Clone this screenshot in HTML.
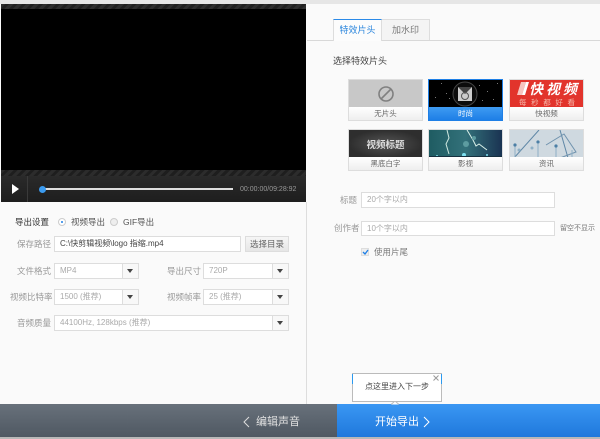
<!DOCTYPE html>
<html><head><meta charset="utf-8">
<style>
*{box-sizing:border-box;margin:0;padding:0}
html,body{width:600px;height:439px;overflow:hidden;background:#fafafa;font-family:"Liberation Sans","Noto Sans CJK SC",sans-serif;font-size:8.5px;color:#888}
#w{position:absolute;left:0;top:0;width:600px;height:439px;filter:blur(.35px);background:#fafafa}
.a{position:absolute}
.t{position:absolute;white-space:nowrap;line-height:12px;height:12px}
.inp{position:absolute;background:#fff;border:1px solid #ddd;height:16px;line-height:13px;padding-left:5px;color:#aaa;font-size:8px}
.sel{position:absolute;background:#fff;border:1px solid #ddd;height:16px;line-height:14px;padding-left:5px;color:#aaa;font-size:8px}
.sel i{position:absolute;right:0;top:0;width:16px;height:14px;border-left:1px solid #ddd;background:#f8f8f8}
.sel i:after{content:"";position:absolute;left:4px;top:5px;border:3px solid transparent;border-top:4px solid #444;border-bottom:0}
.th{position:absolute;width:75px;height:42px;background:#f6f6f6;border:1px solid #ddd}
.th svg{position:absolute;left:0;top:0;display:block}
.th span{position:absolute;left:0;right:0;bottom:0;height:13px;line-height:13px;text-align:center;font-size:7.5px;color:#666;background:linear-gradient(#fff,#eee)}
</style></head><body><div id="w">
<div class="a" style="left:0;top:0;width:600px;height:4px;background:#e6e6e6"></div>

<!-- left: video -->
<div class="a" style="left:1px;top:4px;width:305px;height:198px;background:#000"></div>
<div class="a" style="left:1px;top:4px;width:305px;height:5px;background:repeating-linear-gradient(135deg,#2e2e2e 0 3px,#202020 3px 6px)"></div>
<div class="a" style="left:1px;top:170px;width:305px;height:6px;background:repeating-linear-gradient(135deg,#2c2c2c 0 3px,#1e1e1e 3px 6px)"></div>
<div class="a" style="left:1px;top:176px;width:305px;height:26px;background:linear-gradient(#2a2a2a,#1e1e1e)"></div>
<div class="a" style="left:27px;top:176px;width:1px;height:26px;background:#3a3a3a"></div>
<svg class="a" style="left:12px;top:184px" width="8" height="10"><path d="M0 0L7 5L0 10Z" fill="#fff"/></svg>
<div class="a" style="left:42px;top:188px;width:191px;height:2px;background:#ddd"></div>
<div class="a" style="left:39px;top:186px;width:7px;height:7px;border-radius:50%;background:#3b9bf0"></div>
<div class="t" style="left:240px;top:183px;color:#999;font-size:7px;line-height:13px">00:00:00/09:28:92</div>

<!-- left form -->
<div class="t" style="left:15px;top:216px;color:#333">导出设置</div>
<div class="a" style="left:58px;top:218px;width:8px;height:8px;border-radius:50%;border:1px solid #ccc;background:#fff"></div>
<div class="a" style="left:61px;top:221px;width:2px;height:2px;background:#1e7fe6;border-radius:50%"></div>
<div class="t" style="left:71px;top:216px;color:#555">视频导出</div>
<div class="a" style="left:110px;top:218px;width:8px;height:8px;border-radius:50%;border:1px solid #ccc;background:#eee"></div>
<div class="t" style="left:123px;top:216px;color:#555">GIF导出</div>

<div class="t" style="left:17px;top:238px;color:#999">保存路径</div>
<div class="inp" style="left:54px;top:236px;width:187px;color:#444;font-size:8px">C:\快剪辑视频\logo 指缩.mp4</div>
<div class="a" style="left:245px;top:236px;width:44px;height:16px;background:linear-gradient(#f6f6f6,#e6e6e6);border:1px solid #ddd;text-align:center;line-height:14px;color:#666;font-size:8.5px">选择目录</div>

<div class="t" style="left:17px;top:265px;color:#999">文件格式</div>
<div class="sel" style="left:54px;top:263px;width:85px">MP4<i></i></div>
<div class="t" style="left:167px;top:265px;color:#999">导出尺寸</div>
<div class="sel" style="left:203px;top:263px;width:86px">720P<i></i></div>

<div class="t" style="left:10px;top:291px;color:#999">视频比特率</div>
<div class="sel" style="left:54px;top:289px;width:85px">1500 (推荐)<i></i></div>
<div class="t" style="left:167px;top:291px;color:#999">视频帧率</div>
<div class="sel" style="left:203px;top:289px;width:86px">25 (推荐)<i></i></div>

<div class="t" style="left:17px;top:317px;color:#999">音频质量</div>
<div class="sel" style="left:54px;top:315px;width:235px">44100Hz, 128kbps (推荐)<i></i></div>

<div class="a" style="left:306px;top:202px;width:1px;height:202px;background:#ddd"></div>

<!-- tabs -->
<div class="a" style="left:307px;top:40px;width:293px;height:1px;background:#d8d8d8"></div>
<div class="a" style="left:333px;top:19px;width:49px;height:22px;background:#fcfcfc;border:1px solid #ddd;border-top:1px solid #2b8ae8;border-bottom:0;text-align:center;line-height:21px;color:#2b86dd;font-size:9px">特效片头</div>
<div class="a" style="left:382px;top:19px;width:48px;height:21px;background:#f4f4f4;border:1px solid #ddd;border-left:0;border-bottom:0;text-align:center;line-height:21px;color:#777;font-size:9px">加水印</div>
<div class="t" style="left:333px;top:55px;color:#444;font-size:9px">选择特效片头</div>

<!-- thumbs -->
<div class="th" style="left:348px;top:79px"><svg width="73" height="27"><rect width="73" height="27" fill="#c8c8c8"/><circle cx="37" cy="14" r="7" fill="none" stroke="#808080" stroke-width="1.6"/><path d="M32 19L42 9" stroke="#808080" stroke-width="1.6"/></svg><span>无片头</span></div>

<div class="th" style="left:428px;top:79px;border-color:#1e7fe6"><svg width="73" height="28"><rect width="73" height="28" fill="#000"/><g fill="#777"><rect x="12" y="3" width="1" height="1"/><rect x="17" y="13" width="1" height="1"/><rect x="6" y="17" width="1" height="1"/><rect x="20" y="18" width="1" height="1"/><rect x="25" y="10" width="1" height="1"/><rect x="50" y="5" width="1" height="1"/><rect x="58" y="11" width="1" height="1"/><rect x="64" y="19" width="1" height="1"/><rect x="53" y="20" width="1" height="1"/><rect x="68" y="3" width="1" height="1"/></g><circle cx="36" cy="14" r="12" fill="#0c0c0c" stroke="#444"/><rect x="29" y="7" width="14" height="14" fill="#ccc"/><path d="M29 7L36 14L43 7Z" fill="#444"/><circle cx="36" cy="16" r="3.5" fill="none" stroke="#555"/></svg><span style="background:linear-gradient(#3f9bf2,#1e7fe6);color:#fff">时尚</span></div>

<div class="th" style="left:509px;top:79px"><svg width="73" height="27"><rect width="73" height="27" fill="#e2342c"/><path d="M7 15L11 2H16L12 15Z" fill="#f6c5c0"/><path d="M12 15L16 2H19L15 15Z" fill="#fff"/><text x="19" y="14" font-size="14" font-weight="bold" font-style="italic" fill="#fff" font-family="'Noto Sans CJK SC',sans-serif" textLength="48">快视频</text><text x="9" y="25" font-size="7.500" fill="#f5b5a8" textLength="56" font-family="'Noto Sans CJK SC',sans-serif">每秒都好看</text></svg><span>快视频</span></div>

<div class="th" style="left:348px;top:129px"><svg width="73" height="28"><defs><radialGradient id="g1"><stop offset="0" stop-color="#555"/><stop offset="1" stop-color="#2e2e2e"/></radialGradient></defs><rect width="73" height="28" fill="url(#g1)"/><text x="36.500" y="18" text-anchor="middle" font-size="9.500" font-weight="bold" fill="#ddd" font-family="'Noto Sans CJK SC',sans-serif">视频标题</text></svg><span>黑底白字</span></div>

<div class="th" style="left:428px;top:129px"><svg width="73" height="28"><defs><linearGradient id="g2" x1="0" x2="1"><stop offset="0" stop-color="#1f5c62"/><stop offset=".5" stop-color="#33717a"/><stop offset="1" stop-color="#1a3352"/></linearGradient></defs><rect width="73" height="28" fill="url(#g2)"/><path d="M18 0L20 8L17 14L20 24" stroke="#cfe8e0" fill="none"/><path d="M38 0L44 10L47 16L50 14L58 20" stroke="#d8efe8" fill="none"/><circle cx="37" cy="14" r="3" fill="#5d9ca0"/><circle cx="45" cy="8" r="2" fill="#5d9ca0"/><circle cx="35" cy="25" r="2" fill="#7fe0f0"/><circle cx="8" cy="26" r="1" fill="#7fe0f0"/><circle cx="58" cy="25" r="1" fill="#7fe0f0"/><rect y="26" width="73" height="2" fill="#16303f"/></svg><span>影视</span></div>

<div class="th" style="left:509px;top:129px"><svg width="73" height="28"><rect width="73" height="28" fill="#cfd9e0"/><path d="M4 28L29 0M50 0L58 28" stroke="#5f87a6" fill="none"/><path d="M36 15L54 4L66 22L50 28" stroke="#6f92ad" fill="none"/><g stroke="#8fb0c6"><path d="M5 15V28M28 14V28M46 16V28M62 20V28"/></g><circle cx="5" cy="15" r="1.600" fill="#4c7fa5"/><circle cx="28" cy="12" r="1.600" fill="#4c7fa5"/><circle cx="46" cy="16" r="1.600" fill="#4c7fa5"/><circle cx="9" cy="20" r="1.500" fill="#8fb0c6"/><circle cx="22" cy="18" r="1.500" fill="#8fb0c6"/></svg><span>资讯</span></div>

<!-- right form -->
<div class="t" style="left:340px;top:194px;color:#999">标题</div>
<div class="inp" style="left:361px;top:192px;width:194px;height:16px">20个字以内</div>
<div class="t" style="left:334px;top:222px;color:#999">创作者</div>
<div class="inp" style="left:361px;top:221px;width:194px;height:15px">10个字以内</div>
<div class="t" style="left:560px;top:223px;color:#777;font-size:7px">留空不显示</div>
<div class="a" style="left:361px;top:248px;width:8px;height:8px;background:#eee;border:1px solid #ddd"></div>
<svg class="a" style="left:362px;top:249px" width="7" height="6"><path d="M1 3L3 5L6 1" fill="none" stroke="#1e7fe6" stroke-width="1.300"/></svg>
<div class="t" style="left:374px;top:246px;color:#777">使用片尾</div>

<!-- bottom -->
<div class="a" style="left:0;top:404px;width:337px;height:33px;background:linear-gradient(#68717b,#4f5862)"></div>
<svg class="a" style="left:243px;top:416px" width="8" height="12"><path d="M6 1L1 6L6 11" fill="none" stroke="#ddd"/></svg>
<div class="t" style="left:256px;top:414px;height:16px;line-height:16px;color:#e0e0e0;font-size:11px">编辑声音</div>
<div class="a" style="left:337px;top:404px;width:263px;height:33px;background:linear-gradient(#3a97f3,#1f78dc)"></div>
<div class="t" style="left:375px;top:414px;height:16px;line-height:16px;color:#fff;font-size:11px">开始导出</div>
<svg class="a" style="left:423px;top:416px" width="8" height="12"><path d="M1 1L6 6L1 11" fill="none" stroke="#fff"/></svg>
<div class="a" style="left:0;top:437px;width:600px;height:2px;background:#b8b8b8"></div>

<!-- tooltip -->
<div class="a" style="left:352px;top:373px;width:90px;height:29px;background:#fff;border:1px solid #bbb;text-align:center;line-height:26px;color:#444;font-size:8px">点这里进入下一步</div>
<div class="a" style="left:352px;top:374px;width:1px;height:10px;background:#2b9af0"></div>
<div class="a" style="left:441px;top:374px;width:1px;height:10px;background:#2b9af0"></div>
<svg class="a" style="left:433px;top:375px" width="6" height="6"><path d="M.5 .5L5.500 5.500M5.500 .5L.5 5.500" stroke="#999"/></svg>
<svg class="a" style="left:391px;top:401px" width="8" height="4"><path d="M0 3.500L4 0L8 3.500" fill="#fff" stroke="#bbb"/></svg>
</div></body></html>
